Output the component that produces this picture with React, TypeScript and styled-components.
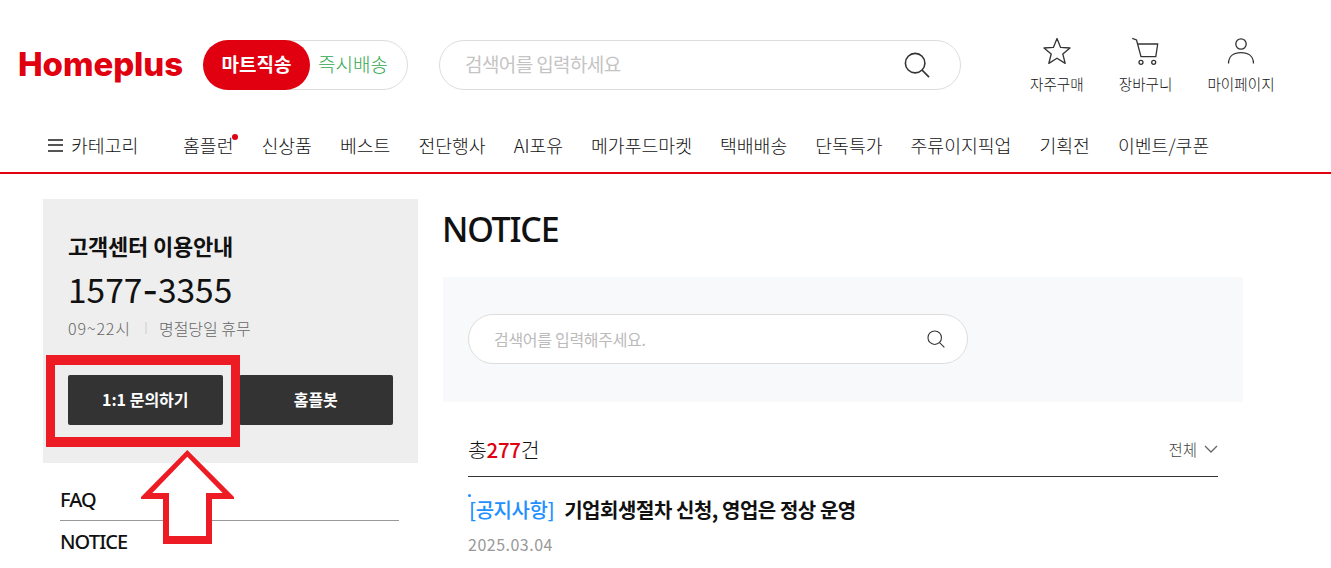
import React from 'react';
import styled, { createGlobalStyle } from 'styled-components';

const FONT = '"Noto Sans CJK KR", "Noto Sans", sans-serif';

const GlobalStyle = createGlobalStyle`
    html, body {
        margin: 0;
        padding: 0;
        background: #fff;
        overflow: hidden;
    }
    body {
        font-family: ${FONT};
        color: #111;
    }
    * {
        box-sizing: border-box;
    }
`;

const NAV_ITEMS = ['신상품', '베스트', '전단행사', 'AI포유', '메가푸드마켓', '택배배송', '단독특가', '주류이지픽업', '기획전', '이벤트/쿠폰'];

const SearchIcon = ({ size }: { size: number }) => (
    <svg width={size} height={size} viewBox="0 0 28 28" fill="none" stroke="#333" strokeWidth="1.7">
        <circle cx="12" cy="12" r="10.5" />
        <path d="M19.5 19.5 L27 27" />
    </svg>
);

const App = () => {
    return (
        <Page>
            <GlobalStyle />
            <Header>
                <TopRow>
                    <Logo>Homeplus</Logo>
                    <Toggle>
                        <ToggleActive>마트직송</ToggleActive>
                        <ToggleOther>즉시배송</ToggleOther>
                    </Toggle>
                    <TopSearch>
                        <span>검색어를 입력하세요</span>
                        <SearchIcon size={26} />
                    </TopSearch>
                    <Shortcuts>
                        <Shortcut>
                            <svg width="30" height="28" viewBox="0 0 30 28" fill="none" stroke="#333" strokeWidth="1.3" strokeLinejoin="round">
                                <path d="M15 1.5 L18.6 10.4 L28 11 L20.8 17 L23.2 26.4 L15 21.2 L6.8 26.4 L9.2 17 L2 11 L11.4 10.4 Z" />
                            </svg>
                            <span>자주구매</span>
                        </Shortcut>
                        <Shortcut>
                            <svg width="30" height="28" viewBox="0 0 30 28" fill="none" stroke="#333" strokeWidth="1.3">
                                <path d="M1.3 1.3 L5.5 3 L10 19.7 H24.8 L26.7 7 H6.5" />
                                <circle cx="10" cy="25.3" r="2" />
                                <circle cx="22.7" cy="25.3" r="2" />
                            </svg>
                            <span>장바구니</span>
                        </Shortcut>
                        <Shortcut>
                            <svg width="30" height="28" viewBox="0 0 30 28" fill="none" stroke="#333" strokeWidth="1.3">
                                <circle cx="15" cy="7" r="5.2" />
                                <path d="M2.5 26.5 C2.5 19 8 15.6 15 15.6 C22 15.6 27.5 19 27.5 26.5" />
                            </svg>
                            <span>마이페이지</span>
                        </Shortcut>
                    </Shortcuts>
                </TopRow>
                <Nav>
                    <CategoryButton>
                        <Burger />
                        카테고리
                    </CategoryButton>
                    <NavList>
                        <NavItem>
                            홈플런
                            <RedDot />
                        </NavItem>
                        {NAV_ITEMS.map((item) => (
                            <NavItem key={item}>{item}</NavItem>
                        ))}
                    </NavList>
                </Nav>
            </Header>

            <Body>
                <Sidebar>
                    <HelpCard>
                        <HelpTitle>고객센터 이용안내</HelpTitle>
                        <HelpPhone>
                            1577<Dash>-</Dash>3355
                        </HelpPhone>
                        <HelpHours>
                            <HoursTime>09~22시</HoursTime>
                            <HoursDivider />
                            명절당일 휴무
                        </HelpHours>
                        <HelpButtons>
                            <DarkButton>1:1 문의하기</DarkButton>
                            <DarkButton>홈플봇</DarkButton>
                        </HelpButtons>
                    </HelpCard>
                    <SideMenu>
                        <SideItem $line>FAQ</SideItem>
                        <SideItem>NOTICE</SideItem>
                    </SideMenu>
                </Sidebar>

                <Main>
                    <Title>NOTICE</Title>
                    <SearchPanel>
                        <PanelSearch>
                            <span>검색어를 입력해주세요.</span>
                            <SearchIcon size={18} />
                        </PanelSearch>
                    </SearchPanel>
                    <ListHead>
                        <Total>
                            총<b>277</b>건
                        </Total>
                        <Filter>
                            전체
                            <svg width="14" height="8" viewBox="0 0 14 8" fill="none" stroke="#666" strokeWidth="1.3">
                                <path d="M1 1 L7 7 L13 1" />
                            </svg>
                        </Filter>
                    </ListHead>
                    <Article>
                        <BlueDot />
                        <ArticleTitle>
                            <em>[공지사항]</em>기업회생절차 신청, 영업은 정상 운영
                        </ArticleTitle>
                        <ArticleDate>2025.03.04</ArticleDate>
                    </Article>
                </Main>
            </Body>

            <Highlight />
            {/* annotation arrow: red outline over a white inside */}
            <Arrow width="96" height="98" viewBox="0 0 96 98">
                <path fill="#ed1c24" d="M47.3 2 L94 49 V51 H72 V96 H23 V51 H1 V49 Z" />
                <path fill="#fff" d="M47.3 8.7 L82.7 45 H66 V88 H29 V45 H12.3 Z" />
            </Arrow>
        </Page>
    );
};

const Page = styled.div`
    position: relative;
    width: 1331px;
    height: 568px;
    overflow: hidden;
`;

const Header = styled.header`
    height: 174px;
    border-bottom: 2px solid #e0000f;
`;

const TopRow = styled.div`
    display: flex;
    align-items: flex-start;
    height: 118px;
    padding: 40px 0 0 18px;
`;

const Logo = styled.div`
    width: 185px;
    height: 50px;
    font-family: Inter, sans-serif;
    font-size: 33px;
    font-weight: 800;
    line-height: 49px;
    letter-spacing: -0.1px;
    color: #e0000f;
`;

const Toggle = styled.div`
    display: flex;
    width: 205px;
    height: 50px;
    border: 1px solid #ddd;
    border-radius: 25px;
`;

const ToggleActive = styled.div`
    display: flex;
    align-items: center;
    justify-content: center;
    width: 107px;
    height: 50px;
    margin: -1px 0 0 -1px;
    padding-bottom: 3px;
    border-radius: 25px;
    background: #e0000f;
    color: #fff;
    font-size: 19px;
    font-weight: 700;
`;

const ToggleOther = styled.div`
    display: flex;
    align-items: center;
    padding: 0 0 3px 8px;
    color: #2fa74f;
    font-size: 19px;
    font-weight: 300;
`;

const TopSearch = styled.div`
    display: flex;
    align-items: center;
    justify-content: space-between;
    width: 522px;
    height: 50px;
    margin-left: 31px;
    padding: 0 30px 0 25px;
    border: 1px solid #ddd;
    border-radius: 25px;
    color: #c4c4c4;
    font-size: 19px;
    letter-spacing: -0.6px;

    span {
        margin-bottom: 3px;
    }
`;

const Shortcuts = styled.div`
    display: flex;
    gap: 35px;
    margin: -3px 0 0 69px;
`;

const Shortcut = styled.div`
    display: flex;
    flex-direction: column;
    align-items: center;
    gap: 9px;
    font-size: 14.6px;
    font-weight: 300;
    color: #111;
    line-height: 20px;
`;

const Nav = styled.nav`
    display: flex;
    align-items: center;
    height: 54px;
    padding-left: 48px;
    font-size: 18.3px;
    font-weight: 300;
    color: #111;
`;

const CategoryButton = styled.div`
    display: flex;
    align-items: center;
    gap: 8px;
    width: 135px;
`;

const Burger = styled.span`
    display: block;
    width: 15px;
    height: 13px;
    border-top: 2px solid #555;
    border-bottom: 2px solid #555;
    background: linear-gradient(#555, #555) center / 100% 2px no-repeat;
`;

const NavList = styled.div`
    display: flex;
    gap: 28px;
`;

const NavItem = styled.div`
    position: relative;
    white-space: nowrap;
`;

const RedDot = styled.span`
    position: absolute;
    top: 2px;
    right: -5px;
    width: 6px;
    height: 6px;
    border-radius: 50%;
    background: #e0000f;
`;

const Body = styled.div`
    display: flex;
    gap: 25px;
    padding: 25px 0 0 43px;
`;

const Sidebar = styled.aside`
    width: 375px;
`;

const HelpCard = styled.div`
    height: 264px;
    padding: 28px 25px 0;
    background: #eee;
`;

const HelpTitle = styled.div`
    font-size: 22px;
    font-weight: 700;
    line-height: 36px;
    letter-spacing: -0.2px;
`;

const HelpPhone = styled.div`
    height: 44px;
    margin-top: 4px;
    font-size: 33.5px;
    font-weight: 400;
    line-height: 44px;
`;

// the reference's hyphen is wider and heavier than the Noto one
const Dash = styled.span`
    font-family: Inter, sans-serif;
    font-weight: 500;
`;

const HelpHours = styled.div`
    display: flex;
    align-items: center;
    margin-top: 5px;
    font-size: 16px;
    font-weight: 300;
    line-height: 24px;
    color: #666;
`;

const HoursTime = styled.span`
    letter-spacing: 0.9px;
`;

const HoursDivider = styled.i`
    width: 2px;
    height: 12px;
    margin: 0 12px 0 14px;
    background: #ddd;
`;

const HelpButtons = styled.div`
    display: flex;
    gap: 16px;
    margin-top: 35px;
`;

const DarkButton = styled.div`
    display: flex;
    align-items: center;
    justify-content: center;
    width: 155px;
    height: 50px;
    padding-bottom: 3px;
    border-radius: 2px;
    background: #333;
    color: #fff;
    font-size: 16px;
    font-weight: 700;
`;

const SideMenu = styled.div`
    margin: 16px 19px 0 17px;
`;

const SideItem = styled.div<{ $line?: boolean }>`
    height: 42px;
    border-bottom: ${(p) => (p.$line ? '1px solid #999' : 'none')};
    font-family: "Noto Sans", sans-serif;
    font-size: 20px;
    font-weight: 500;
    line-height: 42px;
    letter-spacing: -0.9px;
    color: #111;
`;

const Main = styled.main`
    width: 800px;
`;

const Title = styled.h1`
    height: 78px;
    margin: 0 0 0 -1px;
    font-family: "Noto Sans", sans-serif;
    font-size: 34px;
    font-weight: 500;
    line-height: 60px;
    letter-spacing: -1.2px;
    color: #111;
`;

const SearchPanel = styled.div`
    display: flex;
    align-items: center;
    height: 125px;
    padding: 0 0 1px 25px;
    background: #f8f9fb;
`;

const PanelSearch = styled.div`
    display: flex;
    align-items: center;
    justify-content: space-between;
    width: 500px;
    height: 50px;
    padding: 0 22px 0 25px;
    border: 1px solid #ddd;
    border-radius: 25px;
    background: #fff;
    color: #bbb;
    font-size: 16px;
    letter-spacing: -0.3px;
`;

const ListHead = styled.div`
    display: flex;
    align-items: center;
    justify-content: space-between;
    height: 75px;
    margin: 0 25px;
    padding-top: 20px;
    border-bottom: 1px solid #333;
`;

const Total = styled.div`
    font-size: 20.5px;
    font-weight: 300;
    letter-spacing: -0.3px;

    b {
        font-weight: 500;
        color: #e0000f;
    }
`;

const Filter = styled.div`
    display: flex;
    align-items: center;
    gap: 7px;
    font-size: 15.5px;
    font-weight: 300;
    color: #444;
`;

const Article = styled.article`
    position: relative;
    margin: 0 25px;
    padding-top: 17px;
`;

const BlueDot = styled.span`
    position: absolute;
    top: 17px;
    left: 0;
    width: 3px;
    height: 3px;
    border-radius: 50%;
    background: #1e90ff;
`;

const ArticleTitle = styled.div`
    font-size: 20px;
    font-weight: 700;
    line-height: 32px;
    letter-spacing: -0.45px;
    color: #111;

    em {
        margin: 0 10px 0 1px;
        font-style: normal;
        font-weight: 500;
        color: #1e90ff;
    }
`;

const ArticleDate = styled.div`
    margin-top: 5px;
    font-size: 16px;
    line-height: 26px;
    letter-spacing: 0.5px;
    color: #999;
`;

const Highlight = styled.div`
    position: absolute;
    top: 355px;
    left: 46px;
    width: 194px;
    height: 92px;
    border: 10px solid #ed1c24;
    border-left-width: 9px;
    border-right-width: 9px;
`;

const Arrow = styled.svg`
    position: absolute;
    top: 448px;
    left: 140px;
`;

export default App;
